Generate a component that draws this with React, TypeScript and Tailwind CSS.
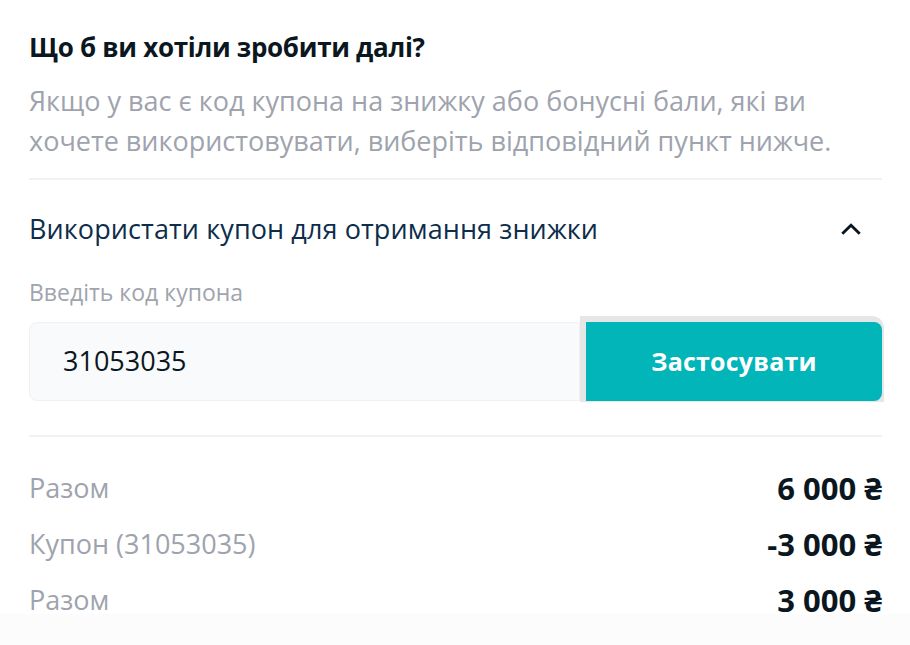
import React from "react";

export default function App() {
  const font = { fontFamily: '"Open Sans", "Noto Sans", sans-serif' };
  return (
    <div className="w-[910px] h-[645px] bg-[linear-gradient(to_bottom,#ffffff_614px,#fcfcfc_614px)]" style={font}>
      <div className="pl-[29px] pr-[28px] pt-[28px]">
        <h2 className="text-[26px] leading-[38px] font-bold text-[#0b1720] tracking-[-0.3px]">
          Що б ви хотіли зробити далі?
        </h2>
        <p className="mt-[15px] text-[27px] leading-[40px] text-[#9ea3ad]">
          Якщо у вас є код купона на знижку або бонусні бали, які ви хочете використовувати, виберіть відповідний пункт нижче.
        </p>
        <div className="mt-[17px] h-[2px] bg-[#f1f1f3]" />
        <div className="mt-[31px] flex items-center justify-between h-[36px]">
          <span className="text-[27px] text-[#0c2d4b] tracking-[0.1px]">Використати купон для отримання знижки</span>
          <svg width="22" height="22" viewBox="0 0 20 20" className="mr-[20px]">
            <path d="M3 13.5 L10 6.5 L17 13.5" fill="none" stroke="#0b1720" strokeWidth="2.6" strokeLinecap="square" />
          </svg>
        </div>
        <div className="mt-[31px] text-[23px] leading-[28px] text-[#a0a4ad]">Введіть код купона</div>
        <div className="mt-[10px] flex">
          <div className="mt-[6px] flex-1 h-[79px] bg-[#f9fafb] border border-[#f0f1f3] rounded-l-lg flex items-center pl-[33px] text-[27px] text-[#0b1720]">
            31053035
          </div>
          <div className="w-[304px] -mr-[2px] bg-[#e6e6e7] rounded-tr-xl pl-[6px] pt-[6px] pr-[2px] pb-[1px]">
            <button className="w-full h-[79px] bg-[#02b5b8] rounded-r-lg text-white text-[25px] font-bold tracking-[0.2px]">
              Застосувати
            </button>
          </div>
        </div>
        <div className="mt-[33px] h-[2px] bg-[#f1f1f3]" />
        <div className="mt-[33px] flex flex-col gap-[20px]">
          {[
            ["Разом", "6 000 ₴"],
            ["Купон (31053035)", "-3 000 ₴"],
            ["Разом", "3 000 ₴"],
          ].map(([l, v], i) => (
            <div key={i} className="flex items-center justify-between h-[36px]">
              <span className="text-[27px] text-[#9ea3ad]">{l}</span>
              <span className="text-[31px] font-bold text-[#0b1720]">{v}</span>
            </div>
          ))}
        </div>
      </div>
    </div>
  );
}
